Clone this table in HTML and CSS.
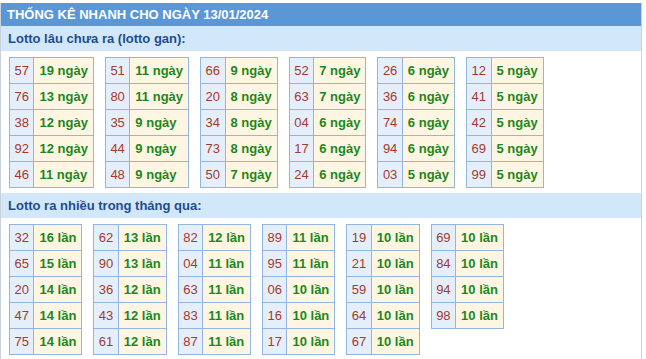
FILE: index.html
```html
<!DOCTYPE html>
<html lang="vi">
<head>
<meta charset="utf-8">
<title>Thống kê nhanh</title>
<link rel="stylesheet" href="styles.css">
</head>
<body>
<div class="box">
  <div class="title">THỐNG KÊ NHANH CHO NGÀY 13/01/2024</div>
  <div class="subhead">Lotto lâu chưa ra (lotto gan):</div>
  <div class="tables">
    <table class="t"><tr><td class="n">57</td><td class="v">19 ngày</td></tr><tr><td class="n">76</td><td class="v">13 ngày</td></tr><tr><td class="n">38</td><td class="v">12 ngày</td></tr><tr><td class="n">92</td><td class="v">12 ngày</td></tr><tr><td class="n">46</td><td class="v">11 ngày</td></tr></table>
    <table class="t"><tr><td class="n">51</td><td class="v">11 ngày</td></tr><tr><td class="n">80</td><td class="v">11 ngày</td></tr><tr><td class="n">35</td><td class="v">9 ngày</td></tr><tr><td class="n">44</td><td class="v">9 ngày</td></tr><tr><td class="n">48</td><td class="v">9 ngày</td></tr></table>
    <table class="t"><tr><td class="n">66</td><td class="v">9 ngày</td></tr><tr><td class="n">20</td><td class="v">8 ngày</td></tr><tr><td class="n">34</td><td class="v">8 ngày</td></tr><tr><td class="n">73</td><td class="v">8 ngày</td></tr><tr><td class="n">50</td><td class="v">7 ngày</td></tr></table>
    <table class="t"><tr><td class="n">52</td><td class="v">7 ngày</td></tr><tr><td class="n">63</td><td class="v">7 ngày</td></tr><tr><td class="n">04</td><td class="v">6 ngày</td></tr><tr><td class="n">17</td><td class="v">6 ngày</td></tr><tr><td class="n">24</td><td class="v">6 ngày</td></tr></table>
    <table class="t"><tr><td class="n">26</td><td class="v">6 ngày</td></tr><tr><td class="n">36</td><td class="v">6 ngày</td></tr><tr><td class="n">74</td><td class="v">6 ngày</td></tr><tr><td class="n">94</td><td class="v">6 ngày</td></tr><tr><td class="n">03</td><td class="v">5 ngày</td></tr></table>
    <table class="t"><tr><td class="n">12</td><td class="v">5 ngày</td></tr><tr><td class="n">41</td><td class="v">5 ngày</td></tr><tr><td class="n">42</td><td class="v">5 ngày</td></tr><tr><td class="n">69</td><td class="v">5 ngày</td></tr><tr><td class="n">99</td><td class="v">5 ngày</td></tr></table>
  </div>
  <div class="subhead">Lotto ra nhiều trong tháng qua:</div>
  <div class="tables">
    <table class="t"><tr><td class="n">32</td><td class="v">16 lần</td></tr><tr><td class="n">65</td><td class="v">15 lần</td></tr><tr><td class="n">20</td><td class="v">14 lần</td></tr><tr><td class="n">47</td><td class="v">14 lần</td></tr><tr><td class="n">75</td><td class="v">14 lần</td></tr></table>
    <table class="t"><tr><td class="n">62</td><td class="v">13 lần</td></tr><tr><td class="n">90</td><td class="v">13 lần</td></tr><tr><td class="n">36</td><td class="v">12 lần</td></tr><tr><td class="n">43</td><td class="v">12 lần</td></tr><tr><td class="n">61</td><td class="v">12 lần</td></tr></table>
    <table class="t"><tr><td class="n">82</td><td class="v">12 lần</td></tr><tr><td class="n">04</td><td class="v">11 lần</td></tr><tr><td class="n">63</td><td class="v">11 lần</td></tr><tr><td class="n">83</td><td class="v">11 lần</td></tr><tr><td class="n">87</td><td class="v">11 lần</td></tr></table>
    <table class="t"><tr><td class="n">89</td><td class="v">11 lần</td></tr><tr><td class="n">95</td><td class="v">11 lần</td></tr><tr><td class="n">06</td><td class="v">10 lần</td></tr><tr><td class="n">16</td><td class="v">10 lần</td></tr><tr><td class="n">17</td><td class="v">10 lần</td></tr></table>
    <table class="t"><tr><td class="n">19</td><td class="v">10 lần</td></tr><tr><td class="n">21</td><td class="v">10 lần</td></tr><tr><td class="n">59</td><td class="v">10 lần</td></tr><tr><td class="n">64</td><td class="v">10 lần</td></tr><tr><td class="n">67</td><td class="v">10 lần</td></tr></table>
    <table class="t"><tr><td class="n">69</td><td class="v">10 lần</td></tr><tr><td class="n">84</td><td class="v">10 lần</td></tr><tr><td class="n">94</td><td class="v">10 lần</td></tr><tr><td class="n">98</td><td class="v">10 lần</td></tr></table>
  </div>
</div>
</body>
</html>
```

FILE: styles.css
```css
html, body {
  margin: 0;
  padding: 0;
  background: #ffffff;
}
body {
  font-family: "Liberation Sans", Arial, sans-serif;
  font-size: 13px;
}
.box {
  width: 640px;
  margin-top: 3px;
  border-left: 1px solid #c9d1dd;
  border-right: 1px solid #c9d1dd;
  min-height: 360px;
}
.title {
  background: #5b97d7;
  color: #ffffff;
  font-weight: bold;
  height: 23px;
  line-height: 23px;
  padding-left: 6px;
}
.subhead {
  background: #d3e7fb;
  color: #1e4d8c;
  font-weight: bold;
  height: 25px;
  line-height: 25px;
  padding-left: 7px;
}
.tables {
  display: flex;
  align-items: flex-start;
  gap: 11px;
  padding: 6px 0 5px 8px;
}
.t {
  border-collapse: collapse;
  border: 1px solid #92b5e1;
}
.t td {
  border: 1px solid #92b5e1;
  height: 25px;
  white-space: nowrap;
}
.n {
  background: #e5effb;
  color: #a33a2b;
  text-align: center;
  padding: 0 4.5px;
}
.v {
  background: #fef5e3;
  color: #1c881c;
  font-weight: bold;
  padding: 0 5px;
}
```
